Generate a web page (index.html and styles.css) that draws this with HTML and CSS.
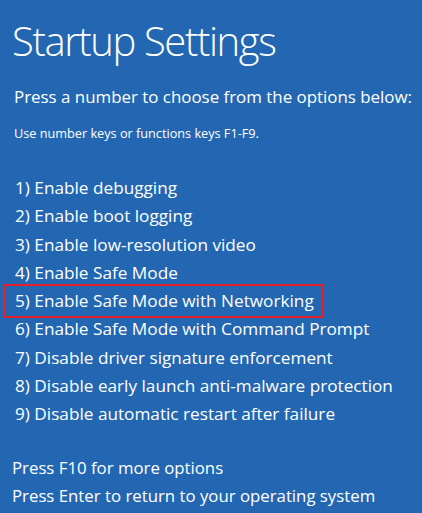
FILE: index.html
```html
<!DOCTYPE html>
<html lang="en">
<head>
    <meta charset="UTF-8">
    <meta name="viewport" content="width=device-width, initial-scale=1.0">
    <title>Startup Settings</title>
    <link rel="stylesheet" href="styles.css">
</head>
<body>
    <div class="screen">
        <h1 class="title">Startup Settings</h1>
        <p class="lead">Press a number to choose from the options below:</p>
        <p class="hint">Use number keys or functions keys F1-F9.</p>

        <ul class="options">
            <li>1) Enable debugging</li>
            <li>2) Enable boot logging</li>
            <li>3) Enable low-resolution video</li>
            <li>4) Enable Safe Mode</li>
            <li class="selected">5) Enable Safe Mode with Networking</li>
            <li>6) Enable Safe Mode with Command Prompt</li>
            <li>7) Disable driver signature enforcement</li>
            <li>8) Disable early launch anti-malware protection</li>
            <li>9) Disable automatic restart after failure</li>
        </ul>

        <div class="footer">
            <p>Press F10 for more options</p>
            <p>Press Enter to return to your operating system</p>
        </div>
    </div>
</body>
</html>
```

FILE: styles.css
```css
body {
    margin: 0;
    padding: 0;
    background-color: #2367b3;
    color: #fff;
    font-family: "Open Sans", "Noto Sans", sans-serif;
    height: 100vh;
    overflow: hidden;
}

.screen {
    padding: 14px 0 0 12px;
}

.title {
    margin: 0;
    font-size: 40px;
    font-weight: 300;
    line-height: 54px;
    letter-spacing: -1.4px;
}

.lead {
    margin: 17px 0 0 2px;
    font-size: 16.9px;
    line-height: 24px;
    white-space: nowrap;
}

.hint {
    margin: 16px 0 0 2px;
    font-size: 12.7px;
    line-height: 16px;
}

.options {
    list-style: none;
    margin: 33px 0 0 0;
    padding: 0;
}

.options li {
    font-size: 17.2px;
    line-height: 28.3px;
    padding-left: 3px;
    white-space: nowrap;
}

.options li.selected {
    margin: -2px 0 -2px -8px;
    padding: 2px 0 2px 11px;
    width: 307px;
    outline: 2px solid #e8202a;
    outline-offset: -1px;
}

.footer {
    margin-top: 25px;
}

.footer p {
    margin: 0;
    font-size: 16.8px;
    line-height: 28.3px;
    white-space: nowrap;
}
```
